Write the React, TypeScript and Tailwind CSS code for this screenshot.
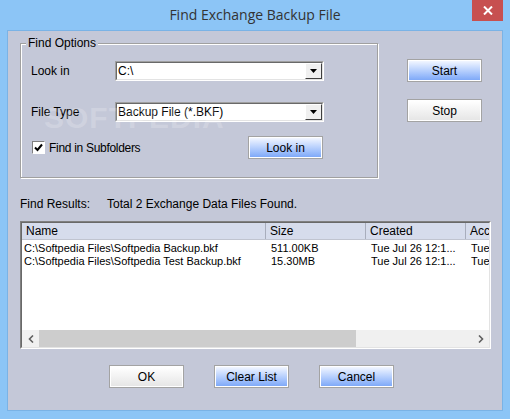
import * as React from "react";

const ui = { fontFamily: '"Liberation Sans", Arial, sans-serif' };

function Btn({ label, blue, className = "" }: { label: string; blue?: boolean; className?: string }) {
    return (
        <div className={`w-[75px] h-[23px] border border-[#a3a3a3] ${className}`}>
            <div
                className={`w-full h-full border border-white flex items-center justify-center text-[12px] text-black ${
                    blue ? "bg-gradient-to-b from-[#f2f6ff] to-[#7fa9f8]" : "bg-gradient-to-b from-white to-[#e6e6e6]"
                }`}
            >
                {label}
            </div>
        </div>
    );
}

function Combo({ value }: { value: string }) {
    return (
        <div className="w-[209px] h-[20px] border border-t-[#a0a0a0] border-l-[#a0a0a0] border-r-white border-b-white">
            <div className="w-full h-full border border-t-[#696969] border-l-[#696969] border-r-[#e3e3e3] border-b-[#e3e3e3] bg-white flex items-center">
                <span className="flex-1 pl-[1px] text-[12px] text-black">{value}</span>
                <div className="w-[17px] h-full border border-t-[#fff] border-l-[#fff] border-r-[#404040] border-b-[#404040] bg-[#f0f0f0] flex items-center justify-center">
                    <svg width="7" height="4" viewBox="0 0 7 4">
                        <path d="M0 0h7L3.5 4z" fill="#000" />
                    </svg>
                </div>
            </div>
        </div>
    );
}

export default function App() {
    const rows = [
        ["C:\\Softpedia Files\\Softpedia Backup.bkf", "511.00KB", "Tue Jul 26 12:1...", "Tue"],
        ["C:\\Softpedia Files\\Softpedia Test Backup.bkf", "15.30MB", "Tue Jul 26 12:1...", "Tue"],
    ];

    return (
        <div className="w-[510px] h-[419px] bg-[#8cc5f6] flex flex-col overflow-hidden" style={ui}>
            {/* title bar */}
            <div className="relative h-[30px] flex items-center justify-center">
                <span className="text-[14px] text-[#333] mt-[-1px]" style={{ fontFamily: '"Open Sans", "Noto Sans", sans-serif' }}>
                    Find Exchange Backup File
                </span>
                <div className="absolute right-[7px] top-0 w-[31px] h-[21px] bg-[#c75050] flex items-center justify-center">
                    <svg width="10" height="9" viewBox="0 0 10 9">
                        <path d="M1 0.5l8 8M9 0.5l-8 8" stroke="#fff" strokeWidth="2" />
                    </svg>
                </div>
            </div>

            {/* client */}
            <div className="relative ml-[7px] w-[496px] h-[381px] border border-[#7ab3e6] bg-[#c4c8d8] pl-[12px] pt-[12px]">
                <div className="flex">
                    {/* group box */}
                    <div className="relative w-[358px] h-[135px] border border-[#a0a0a0] shadow-[inset_1px_1px_0_#fff,1px_1px_0_#fff] pl-[10px]">
                        <span className="absolute left-[5px] top-[-8px] bg-[#c4c8d8] px-[2px] text-[12px] text-black leading-[14px]">
                            Find Options
                        </span>
                        <div className="flex items-center mt-[17px]">
                            <span className="w-[84px] text-[12px] text-black">Look in</span>
                            <Combo value="C:\" />
                        </div>
                        <div className="flex items-center mt-[21px]">
                            <span className="w-[84px] text-[12px] text-black">File Type</span>
                            <Combo value="Backup File (*.BKF)" />
                        </div>
                        <div className="flex items-center mt-[14px]">
                            <div className="w-[217px] flex items-center">
                                <div className="ml-[1px] w-[13px] h-[13px] border border-t-[#808080] border-l-[#808080] border-r-white border-b-white bg-white flex items-center justify-center">
                                    <svg width="9" height="9" viewBox="0 0 9 9">
                                        <path d="M1 4.5l2.5 2.5L8 1.5" stroke="#000" strokeWidth="2" fill="none" />
                                    </svg>
                                </div>
                                <span className="ml-[4px] text-[12px] text-black tracking-[-0.3px]">Find in Subfolders</span>
                            </div>
                            <Btn label="Look in" blue />
                        </div>
                    </div>

                    {/* side buttons */}
                    <div className="ml-[29px] flex flex-col pt-[16px] gap-[17px]">
                        <Btn label="Start" blue />
                        <Btn label="Stop" />
                    </div>
                </div>

                {/* results label */}
                <div className="flex mt-[19px] text-[12px] text-black leading-[14px]">
                    <span className="w-[87px]">Find Results:</span>
                    <span>Total 2 Exchange Data Files Found.</span>
                </div>

                {/* list view */}
                <div className="mt-[10px] w-[471px] h-[128px] border border-t-[#808080] border-l-[#808080] border-r-white border-b-white">
                    <div className="w-full h-full border border-t-[#696969] border-l-[#696969] border-r-[#e3e3e3] border-b-[#e3e3e3] bg-white flex flex-col overflow-hidden">
                        <div className="flex h-[17px] bg-[#d6dcec] border-b border-[#c0c4d0] text-[12px] text-black shrink-0">
                            <div className="w-[244px] pl-[4px] border-r border-[#a8adbc] flex items-center">Name</div>
                            <div className="w-[100px] pl-[4px] border-r border-[#a8adbc] flex items-center">Size</div>
                            <div className="w-[100px] pl-[4px] border-r border-[#a8adbc] flex items-center">Created</div>
                            <div className="flex-1 pl-[4px] flex items-center whitespace-nowrap overflow-hidden">Acce</div>
                        </div>
                        <div className="flex-1 pt-[2px]">
                            {rows.map((r) => (
                                <div key={r[0]} className="flex h-[13px] text-[11px] text-black leading-[13px] whitespace-nowrap">
                                    <div className="w-[244px] pl-[2px]">{r[0]}</div>
                                    <div className="w-[100px] pl-[5px]">{r[1]}</div>
                                    <div className="w-[100px] pl-[5px]">{r[2]}</div>
                                    <div className="flex-1 pl-[5px] overflow-hidden">{r[3]}</div>
                                </div>
                            ))}
                        </div>
                        <div className="h-[17px] bg-[#f0f0f0] flex items-center shrink-0">
                            <div className="w-[17px] flex items-center justify-center">
                                <svg width="6" height="8" viewBox="0 0 6 8">
                                    <path d="M5 0.5L1.5 4 5 7.5" stroke="#606060" strokeWidth="1.6" fill="none" />
                                </svg>
                            </div>
                            <div className="w-[317px] h-[17px] bg-[#cdcdcd]" />
                            <div className="flex-1" />
                            <div className="w-[17px] flex items-center justify-center">
                                <svg width="6" height="8" viewBox="0 0 6 8">
                                    <path d="M1 0.5L4.5 4 1 7.5" stroke="#606060" strokeWidth="1.6" fill="none" />
                                </svg>
                            </div>
                        </div>
                    </div>
                </div>

                {/* bottom buttons */}
                <div className="flex mt-[16px] pl-[89px] gap-[30px]">
                    <Btn label="OK" />
                    <Btn label="Clear List" blue />
                    <Btn label="Cancel" blue />
                </div>

                {/* watermark */}
                <div className="absolute left-[36px] top-[64px] text-[30px] font-bold tracking-[1px] text-white/20 pointer-events-none select-none">
                    SOFTPEDIA
                </div>
            </div>
        </div>
    );
}
